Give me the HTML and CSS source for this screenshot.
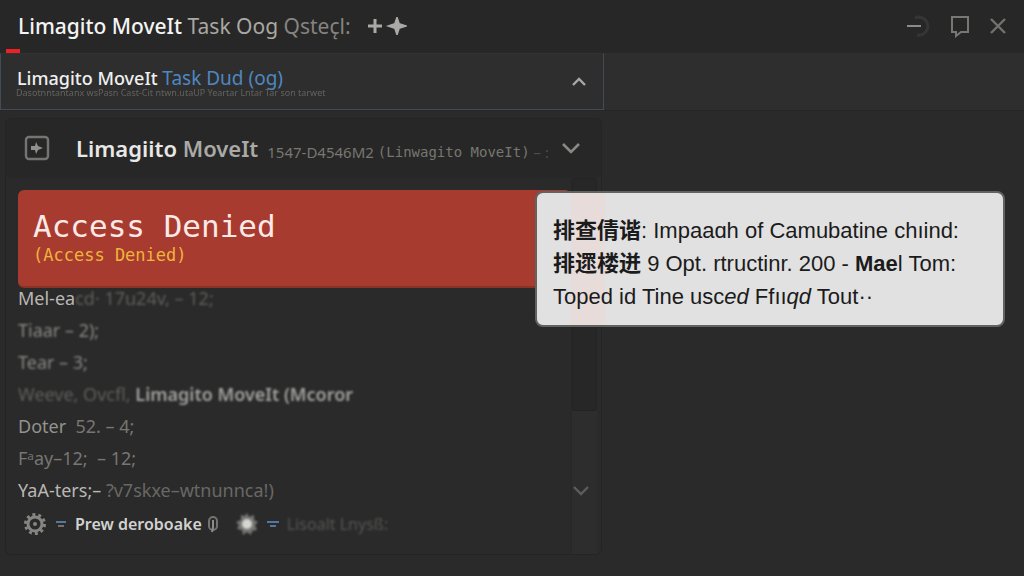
FILE: index.html
```html
<!DOCTYPE html>
<html lang="en">
<head>
<meta charset="utf-8">
<title>Limagito MoveIt</title>
<link rel="stylesheet" href="styles.css">
</head>
<body>
<header class="titlebar">
  <h1 class="title"><span class="title-name">Limagito MoveIt</span> Task Oog <span class="title-dim">Qstec̨l:</span></h1>
  <svg class="sparkles" viewBox="0 0 40 18" aria-hidden="true">
    <path d="M1 9h14M8 2v14" stroke="#aaa9a5" stroke-width="3"/>
    <path d="M30 1l2 6 6 2-6 2-2 6-2-6-6-2 6-2z" fill="#aaa9a5" stroke="#aaa9a5" stroke-width="2"/>
  </svg>
  <div class="window-buttons">
    <button class="icon-button" aria-label="Minimize"><svg width="26" height="24" viewBox="0 0 26 24"><path d="M10 4a9 9 0 1 1 2 17" fill="none" stroke="#353535" stroke-width="3"/><path d="M2 12h14" stroke="#8b8b88" stroke-width="2"/></svg></button>
    <button class="icon-button" aria-label="Comment"><svg width="20" height="24" viewBox="0 0 20 24"><path d="M2 3h16v15H11l-5 4v-4H2z" fill="none" stroke="#777774" stroke-width="2"/></svg></button>
    <button class="icon-button" aria-label="Close"><svg width="18" height="24" viewBox="0 0 18 24"><path d="M2 5l14 14M16 5L2 19" stroke="#72726f" stroke-width="2.4"/></svg></button>
  </div>
</header>
<nav class="tabstrip">
  <div class="tab">
    <div class="tab-text">
      <div class="tab-title">Limagito MoveIt <a href="#task">Task Dud (og)</a></div>
      <div class="tab-note">Dasotnntantanx wsPasn Cast-Cit ntwn.utaUP Yeartar Lntar Tar son tarwet</div>
    </div>
    <button class="icon-button" aria-label="Collapse"><svg width="16" height="12" viewBox="0 0 16 12"><path d="M2 9l6-6 6 6" fill="none" stroke="#a8a8a5" stroke-width="2.4"/></svg></button>
  </div>
</nav>
<main class="workspace">
  <section class="panel">
    <div class="panel-head">
      <svg class="panel-icon" viewBox="0 0 26 26" aria-hidden="true"><rect x="2" y="2" width="22" height="22" rx="3" fill="none" stroke="#747472" stroke-width="2.4"/><path d="M12 7l2 4 5 2-5 2-2 4-1-4H7v-4h4z" fill="#90908d"/></svg>
      <h2 class="panel-title">Limagiito <span>MoveIt</span></h2>
      <p class="panel-meta"><span>1547-D4546M2</span><span class="mono">(Linwagito MoveIt)</span><span class="faint">– :</span></p>
      <button class="icon-button" aria-label="Expand"><svg width="20" height="14" viewBox="0 0 20 14"><path d="M2 3l8 8 8-8" fill="none" stroke="#898986" stroke-width="2.6"/></svg></button>
    </div>
    <div class="panel-body">
      <div class="content">
        <div class="banner" role="alert">
          <strong>Access Denied</strong>
          <em>(Access Denied)</em>
        </div>
        <ul class="log">
          <li><span class="lit">Mel-ea</span><span class="soft">cd· 17u24v, – 12;</span></li>
          <li class="soft mid">Tiaar – 2);</li>
          <li class="soft mid">Tear – 3;</li>
          <li class="soft"><span>Weeve, Ovcfl,</span> <b>Limagito MoveIt (Mcoror</b></li>
          <li class="plain"><span class="mid">Doter</span>  52. – 4;</li>
          <li class="plain">Fᵃay–12;  – 12;</li>
          <li><span class="lit">YaA-ters;–</span> <span class="dim">?v7skxe–wtnunnca!)</span></li>
        </ul>
        <footer class="actions">
          <svg class="gear" viewBox="0 0 24 24" aria-hidden="true"><circle cx="12" cy="12" r="9.5" fill="none" stroke="#858582" stroke-width="3" stroke-dasharray="3 2.97"/><circle cx="12" cy="12" r="7" fill="none" stroke="#858582" stroke-width="3"/><circle cx="12" cy="12" r="2" fill="#858582"/></svg>
          <svg class="dash" viewBox="0 0 12 8" aria-hidden="true"><path d="M1 2h10" stroke="#54779b" stroke-width="2"/><path d="M3 6h6" stroke="#77706a" stroke-width="2"/></svg>
          <button class="text-button">Prew deroboake</button>
          <svg class="clip" viewBox="0 0 10 18" aria-hidden="true"><rect x="1" y="2" width="8" height="13" rx="4" fill="none" stroke="#73736f" stroke-width="2"/><path d="M5 5v8l-1 4" fill="none" stroke="#8c8c88" stroke-width="2"/></svg>
          <svg class="star" viewBox="0 0 24 24" aria-hidden="true"><path d="M12 1l2 4 5-2 0 5 4 2-3 3 2 5-5 1-1 4-4-3-4 3-1-5-5-1 2-4-3-3 5-2 0-5 4 1z" fill="#777775"/><circle cx="12" cy="12" r="5" fill="#d5d5d2"/></svg>
          <svg class="dash" viewBox="0 0 12 8" aria-hidden="true"><path d="M0 2h12" stroke="#4f79a2" stroke-width="2"/><path d="M3 6h6" stroke="#54779b" stroke-width="2"/></svg>
          <span class="ghost">Lisoalt Lnysß:</span>
        </footer>
      </div>
      <div class="scrollbar">
        <div class="thumb"></div>
        <button class="icon-button" aria-label="Scroll down"><svg width="18" height="12" viewBox="0 0 18 12"><path d="M2 2l7 7 7-7" fill="none" stroke="#5d5d5b" stroke-width="2.4"/></svg></button>
      </div>
    </div>
  </section>
  <aside class="tooltip" role="tooltip">
    <p><b>排查倩谐</b>: Impaaɑh of Camubatine chıind:</p>
    <p><b>排遝楼迸</b> 9 Opt. rtructinr. 200 - <span class="heavy">Mae</span>l Tom:</p>
    <p>Toped id Tine usc<i>ed</i> Ffıı<i>qd</i> Tout··</p>
  </aside>
</main>
</body>
</html>
```

FILE: styles.css
```css
* { box-sizing: border-box; }
body {
  margin: 0;
  min-height: 100vh;
  display: flex;
  flex-direction: column;
  background: #2a2a2a;
  color: #777774;
  font-family: "Noto Sans", "Noto Sans CJK SC", sans-serif;
}
h1, h2, p, ul { margin: 0; padding: 0; }
ul { list-style: none; }
svg { display: block; flex: none; }
.icon-button, .text-button { padding: 0; border: 0; background: none; font: inherit; color: inherit; }

.titlebar {
  display: flex;
  align-items: center;
  height: 53px;
  padding: 0 17px 2px 18px;
  background: linear-gradient(#ed2024, #ed2024) 6px 49px / 14px 4px no-repeat #272727;
}
.title { font-size: 21px; line-height: 30px; font-weight: 400; color: #aaa8a2; white-space: nowrap; }
.title-name { font-weight: 500; color: #f4f4f4; }
.title-dim { color: #858480; }
.sparkles { width: 40px; height: 18px; margin-left: 16px; }
.window-buttons { display: flex; gap: 19px; margin-left: auto; }

.tabstrip { height: 58px; background: #2e2e2e; border-bottom: 1px solid #262626; }
.tab {
  display: flex;
  align-items: center;
  justify-content: space-between;
  width: 59%;
  height: 57px;
  padding: 0 16px 0 15px;
  border: 1px solid #434b54;
  border-top-color: #303234;
}
.tab-title { padding-left: 1px; font-size: 18px; line-height: 22px; color: #f0f0f0; font-weight: 500; }
.tab-title a { color: #4e87c0; text-decoration: none; font-weight: 400; font-size: 19px; }
.tab-note { font-size: 9px; line-height: 8px; color: #62625f; filter: blur(0.5px); }

.workspace { position: relative; flex: 1; padding: 7px 0 21px 5px; }
.panel { width: 58.6%; border: 1px solid #242424; border-radius: 6px; background: #2a2a2a; }
.panel-head { display: flex; align-items: center; height: 59px; padding: 0 20px 2px 18px; background: #272727; border-radius: 6px; }
.panel-icon { width: 26px; height: 26px; }
.panel-title { margin-left: 26px; font-size: 22px; line-height: 30px; font-weight: 600; color: #e8e8e6; white-space: nowrap; }
.panel-title span { color: #aaa9a6; }
.panel-meta { display: flex; gap: 4px; margin-left: 9px; padding-top: 8px; font-size: 15px; line-height: 20px; color: #777671; white-space: nowrap; }
.mono { font-family: "DejaVu Sans Mono", monospace; font-size: 14px; }
.faint { color: #4c4c4a; }
.panel-head .icon-button { margin-left: auto; }
.panel-body { display: flex; }
.content { flex: 1; min-width: 0; padding: 12px 0 0 12px; }
.banner {
  display: flex;
  flex-direction: column;
  height: 98px;
  padding: 18px 15px;
  border-radius: 6px;
  border-bottom: 2px solid #8c3128;
  background: #a83b2f;
  font-family: "DejaVu Sans Mono", monospace;
}
.banner strong { font-size: 31px; line-height: 36px; font-weight: 400; color: #fbe9e7; }
.banner em { font-size: 17px; line-height: 22px; font-style: normal; color: #eeb43c; }
.log { font-size: 18px; }
.log li { height: 32px; line-height: 20px; white-space: pre; }
.log .plain { color: #777671; }
.lit { color: #b9b8b4; }
.mid { color: #93928e; }
.dim { color: #686865; }
.soft { color: #5e5e5c; filter: blur(1px); }
.soft.mid { color: #888885; }
.soft b { color: #a2a29f; font-weight: 600; }
.actions { display: flex; align-items: center; height: 24px; padding-left: 5px; margin-bottom: 18px; }
.gear, .star { width: 24px; height: 24px; }
.star { margin-left: 17px; filter: blur(1px); }
.dash { width: 12px; height: 8px; margin: 0 8px; }
.text-button { font-size: 16px; line-height: 24px; font-weight: 600; color: #d2d2d0; }
.clip { width: 10px; height: 18px; margin-left: 6px; }
.ghost { font-size: 16px; line-height: 24px; color: #555553; filter: blur(1px); }
.scrollbar { display: flex; flex-direction: column; align-items: flex-start; width: 26px; margin-right: 4px; background: #2d2d2d; border-left: 1px solid #272727; }
.thumb { width: 100%; height: 62%; background: #272727; border: 1px solid #232323; border-radius: 3px; }
.scrollbar .icon-button { margin-top: 74px; }

.tooltip {
  position: absolute;
  top: 80px;
  left: 535px;
  right: 19px;
  padding: 21px 16px 12px;
  border: 2px solid #60635f;
  border-radius: 8px;
  background: linear-gradient(#e8dcdb, #e8dcdb) 34px 0 / 34px 100% no-repeat #e1e1e1;
  color: #1b1b1b;
  font-family: "Liberation Sans", "Noto Sans CJK SC", sans-serif;
  font-size: 22px;
  line-height: 33px;
  white-space: nowrap;
}
.tooltip b, .heavy { font-weight: 700; }
```
